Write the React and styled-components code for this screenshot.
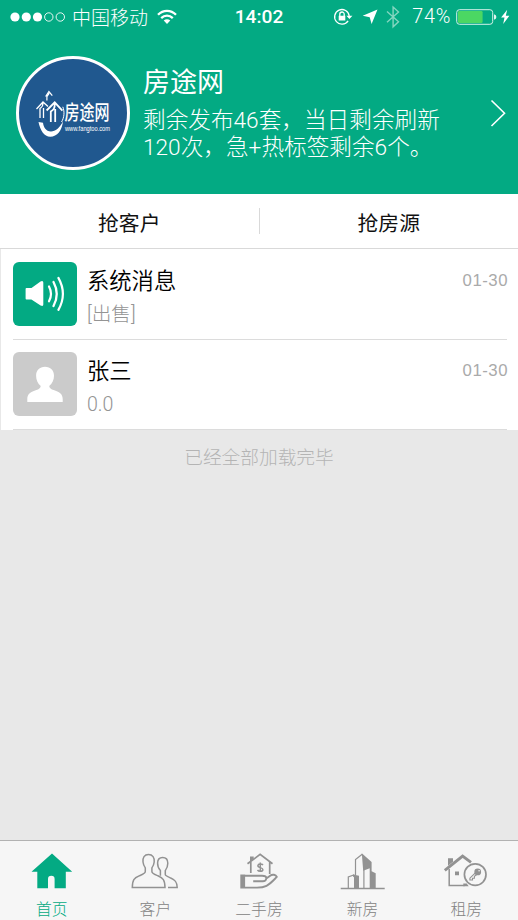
import React from 'react';
import styled, { createGlobalStyle } from 'styled-components';

const GREEN = '#03aa83';
const GRAY = '#929292';

const GlobalStyle = createGlobalStyle`
  * { box-sizing: border-box; }
  body { margin: 0; background: #e8e8e8; }
`;

const Screen = styled.div`
  width: 518px;
  height: 920px;
  display: flex;
  flex-direction: column;
  overflow: hidden;
  background: #e8e8e8;
  font-family: "Liberation Sans", "Noto Sans CJK SC", sans-serif;
  svg { display: block; flex: none; }
`;

const Header = styled.header`
  height: 194px;
  flex: none;
  background: ${GREEN};
  color: #fff;
`;

const StatusBar = styled.div`
  height: 34px;
  display: grid;
  grid-template-columns: 1fr 60px 1fr;
  align-items: center;
  padding: 0 7px 0 10px;
`;

const StatusGroup = styled.div`
  display: flex;
  align-items: center;
  justify-content: ${p => p.$end ? 'flex-end' : 'flex-start'};
`;

const Carrier = styled.span`
  font: 300 19px/28px "Noto Sans CJK SC", sans-serif;
  margin: 0 9px 0 6px;
`;

const Clock = styled.span`
  font: 500 19.2px/28px Roboto, sans-serif;
  text-align: center;
  white-space: nowrap;
  padding-right: 3px;
`;

const Percent = styled.span`
  font: 300 19.8px/28px Roboto, sans-serif;
  letter-spacing: 0.7px;
  margin: 0 5px 0 10px;
`;

const Profile = styled.div`
  display: flex;
  align-items: flex-start;
  padding: 22px 12px 0 16px;
`;

const Avatar = styled.div`
  width: 114px;
  height: 114px;
  border-radius: 50%;
  border: 3.5px solid #fff;
  background: #20588f;
  overflow: hidden;
  flex: none;
`;

const ProfileText = styled.div`
  flex: 1;
  padding: 5px 0 0 13px;
  white-space: nowrap;
`;

const Title = styled.h1`
  margin: 0;
  font: 400 27px/40px "Noto Sans CJK SC", sans-serif;
`;

const Quota = styled.p`
  margin: 6px 0 0;
  font: 300 22.65px/27px Roboto, "Noto Sans CJK SC", sans-serif;
`;

const ChevronSlot = styled.div`
  padding-top: 42px;
`;

const Actions = styled.nav`
  height: 55px;
  flex: none;
  display: flex;
  align-items: center;
  background: #fff;
  border-bottom: 1px solid #d9d9d9;
`;

const Action = styled.div`
  flex: 1;
  text-align: center;
  font: 400 20.8px/30px "Noto Sans CJK SC", sans-serif;
  color: #111;
  padding-top: 1px;
`;

const Divider = styled.div`
  width: 1px;
  height: 26px;
  background: #d9d9d9;
`;

const Messages = styled.main`
  flex: none;
  height: 181px;
  background: #fff;
  border-left: 1px solid #e8e8e8;
  padding: 0 11px 0 12px;
`;

const Message = styled.div`
  height: ${p => p.$last ? 90 : 91}px;
  display: flex;
  align-items: flex-start;
  padding-top: ${p => p.$last ? 12 : 13}px;
  border-bottom: 1px solid #dcdcdc;
`;

const Tile = styled.div`
  width: 64px;
  height: 64px;
  flex: none;
  border-radius: 6px;
  background: ${p => p.$color};
`;

const MessageBody = styled.div`
  flex: 1;
  padding-left: 10px;
`;

const Name = styled.div`
  font: 350 22.3px/34px "Noto Sans CJK SC", sans-serif;
  color: #000;
`;

const Preview = styled.div`
  font: 300 19.6px/30px Roboto, "Noto Sans CJK SC", sans-serif;
  color: #949494;
  margin-top: 4px;
`;

const DateText = styled.time`
  font: 400 16.8px/37px "Liberation Sans", sans-serif;
  letter-spacing: 0.5px;
  color: #aaa;
  margin-right: -1px;
`;

const EndNote = styled.div`
  flex: 1;
  padding-top: 11px;
  text-align: center;
  font: 300 18.7px/30px "Noto Sans CJK SC", sans-serif;
  color: #b4b4b4;
`;

const TabBar = styled.nav`
  height: 80px;
  flex: none;
  display: grid;
  grid-template-columns: repeat(5, 1fr);
  background: #f6f6f6;
  border-top: 1px solid #b2b2b2;
`;

const Tab = styled.div`
  display: flex;
  flex-direction: column;
  align-items: center;
  padding-top: 9px;
  color: ${p => p.$active ? GREEN : GRAY};
`;

const TabLabel = styled.span`
  font: 300 15.8px/24px "Noto Sans CJK SC", sans-serif;
  color: ${p => p.$active ? GREEN : '#838383'};
  margin-top: 7px;
`;

function Signal() {
  return (
    <svg width="56" height="12" viewBox="0 0 56 12" fill="#fff">
      <circle cx="5" cy="6" r="4.6" /><circle cx="16.3" cy="6" r="4.6" /><circle cx="27.5" cy="6" r="4.6" />
      <g fill="none" stroke="#fff" strokeWidth=".9"><circle cx="38.8" cy="6" r="4.2" /><circle cx="50.3" cy="6" r="4.2" /></g>
    </svg>
  );
}

function Wifi() {
  return (
    <svg width="20" height="16" viewBox="0 0 20 16" fill="none" stroke="#fff" strokeWidth="2.3">
      <path d="M1 5.7C6 .5 14 .5 19 5.7M4.2 9.1c3.4-3.3 8.2-3.3 11.6 0" />
      <path d="M6.7 11.5c2-1.8 4.6-1.8 6.6 0L10 15z" fill="#fff" stroke="none" />
    </svg>
  );
}

function StatusIcons() {
  return (
    <svg width="69" height="24" viewBox="0 0 69 24">
      <g fill="none" stroke="#fff" strokeWidth="1.3">
        <path d="M15.1 15.8A7.3 7.3 0 1 1 16.2 11" />
        <path d="M6.8 11V9.2a2.2 2.2 0 0 1 4.4 0V11" />
      </g>
      <path d="M5.7 10.7h6.6v4.9H5.7zM13.4 10.7h6L16.4 14z" fill="#fff" />
      <path d="M44.5 4.5 38.6 19l-1.9-6.7-7-1.6z" fill="#fff" />
      <path d="m54 6.5 11.5 10.2-5.4 5.1V2l5.4 5-11.5 10.2" fill="none" stroke="#84d6c0" strokeWidth="1.4" />
    </svg>
  );
}

function Battery() {
  return (
    <svg width="55" height="20" viewBox="0 0 55 20">
      <rect x=".7" y="2.7" width="36" height="14.6" rx="2.8" fill="none" stroke="#d5f2e9" />
      <rect x="2" y="4" width="24.6" height="12" rx="1.3" fill="#4bd763" />
      <path d="M38 7.2q2.4.5 2.4 2.8T38 12.8z" fill="#e1f5ef" />
      <path d="m51.2 2.8-6.1 7.8h3.4L47.2 17l6.2-8.3h-3.6z" fill="#fff" />
    </svg>
  );
}

function Logo() {
  return (
    <svg width="107" height="107" viewBox="0 0 107 107" fill="none" stroke="#fff">
      <path d="M17.5 50 24 43l5 4.4M24 44c0 4-1.2 4-3 5.5V59M24.5 49v10" strokeWidth="1.3" />
      <path d="M26.6 37.5l3.3-5 3.4 4.2M29.9 34c0 2.5-2 2-2 4v3.5" strokeWidth="1.2" />
      <path d="m27.6 51.5 8.1-8.2 7.7 8.3M35.8 44.5c0 5-1 6-4 8v10.5M36.2 50v13" strokeWidth="1.8" />
      <path d="M43.8 47.8c2 5 1.4 11-1.3 15.2" strokeWidth="1" />
      <path d="M19.5 63c1.7 8 5.5 14.8 11.8 14.8 7 0 11.7-6.4 12.7-15.5-3.6 7.2-7.6 10.2-12.2 10.1-4.9-.1-7.2-3.9-7.8-8.6z" fill="#fff" stroke="none" />
      <text x="45.5" y="61" textLength="45" lengthAdjust="spacingAndGlyphs" fill="#fff" stroke="none" fontFamily="Noto Sans CJK SC" fontSize="20" fontWeight="500">房途网</text>
      <text x="46" y="72.3" textLength="45" lengthAdjust="spacingAndGlyphs" fill="#fff" stroke="none" fontFamily="Liberation Sans" fontSize="7.6">www.fangtoo.com</text>
    </svg>
  );
}

function Chevron() {
  return <svg width="16" height="30" viewBox="0 0 16 30"><path d="m1.5 2.5 13 12.7-13 12.8" fill="none" stroke="#fff" strokeWidth="1.6" /></svg>;
}

function Speaker() {
  return (
    <svg width="64" height="64" viewBox="0 0 64 64" fill="none" stroke="#fff" strokeLinecap="round">
      <path d="M13.5 26h5l9-6.6q2.8-1.3 2.8 1.2v22q0 2.2-2.7.9l-9.2-6h-5q-.8 0-.8-1V27q0-1 .9-1z" fill="#fff" stroke="none" />
      <path d="M36 24.5q4 7.4 0 14.8" strokeWidth="2.2" /><path d="M40.5 20q6.5 12 0 24" strokeWidth="2.3" /><path d="M45.4 15.9q9 16 0 32" strokeWidth="2.2" />
    </svg>
  );
}

function Person() {
  return (
    <svg width="64" height="64" viewBox="0 0 64 64" fill="#fff">
      <path d="M32 14.8c-5.4 0-8.9 3.5-8.9 9 0 4.2 1.6 7.8 4.6 10.1-.2 2.1-2 3.2-4.3 4.1-5.6 2-9.1 3.7-9.1 9.1v2.8h35.4v-2.8c0-5.4-3.6-7.1-9.1-9.1-2.3-.9-4.2-2-4.4-4.1 3.1-2.3 4.8-5.9 4.8-10.1 0-5.5-3.5-9-9-9z" />
    </svg>
  );
}

const TAB_ICONS = {
  home: <path d="M24 3.6 3.5 21.8H9.3V38.3H20V29a3.3 3.3 0 0 1 6.6 0v9.3h11.2V21.8h6.4z" fill="currentColor" />,
  people: (
    <g fill="none" stroke="currentColor" strokeWidth="1.5" transform="translate(.5 0)">
      <path d="M17 4.5c-4.1 0-6 3.1-5.5 7.5.3 2.4 1 4.2 2.3 5.9v3.6c0 2.1-3.1 3.1-6.2 4.4C2.5 28 1 30 .8 37.4h32.7c-.2-7.3-1.8-9.4-7.1-11.6-3-1.2-6-2.1-6-4.2v-3.7c1.3-1.7 2-3.5 2.3-5.9.5-4.4-1.6-7.5-5.7-7.5z" />
      <path d="M28.9 25.7v-5.2c-2-2.1-2.9-4.6-2.8-7.5.1-3.8 2-5.4 5-5.4s5.2 1.9 5.2 5.7c0 3-.8 5.2-2.5 7.3v4c0 1.3 1.9 2 5.4 3.4 4.5 1.8 6.4 3.9 6.5 9.4H36.5" />
    </g>
  ),
  hand: (
    <g fill="none" stroke="currentColor" strokeWidth="1.7" transform="translate(.5 0)">
      <path d="M12 13.8 24.6 4.4 37 13.8M15.3 12V23M34.2 12v12" />
      <path d="M14.5 11.5V6.6h3.7v2.7z" fill="currentColor" stroke="none" />
      <path d="M4.8 24.5h4.8v14H4.8z" fill="currentColor" stroke="none" />
      <path d="M9.5 25.7h17c3 0 4.5.8 4.3 2.8-.2 2-1.6 2.8-3.6 2.8h-9.5M30.8 28.5l3.5-2.6c2.8-2.1 6-1.2 7 1-3 3-6 6.7-10.3 8.9-3 1.5-6 1.8-9.5 1.8h-12" strokeWidth="1.9" />
      <path d="M27.4 15.1c-.6-1.2-4.8-1.6-5 .5-.2 2.5 5.1 1.5 5 4-.1 2.3-4.5 1.9-5.4.4M24.8 12.5v9.6" strokeWidth="1.5" />
    </g>
  ),
  towers: (
    <g stroke="currentColor">
      <path d="M1.7 38.5h44" strokeWidth="1.4" />
      <path d="M9.3 38V27l6-2.2M16.5 25V9.6l6.7-5.4M24.9 38V19.5" fill="none" strokeWidth="1.2" />
      <path d="M14 26.6v-2l6 1.2V38h-5V27.2zM22.8 3.3l9.8 8.8v9.1l4.1 2V38h-6V18.3l-6.5 2.4z" fill="currentColor" stroke="none" />
    </g>
  ),
  key: (
    <g fill="none" stroke="currentColor" transform="translate(-1 0)">
      <path d="M3.8 20.4 21.6 6.2 30 12.4" strokeWidth="2.9" />
      <path d="M8.2 19v16.4h15.5" strokeWidth="1.5" />
      <path d="M7 8.2h5v3.5l-5 4zM14 21.5h4v3.8h-4zM22.3 33.5h3.4l2 2.7h-5.4z" fill="currentColor" stroke="none" />
      <circle cx="34.2" cy="24.6" r="10.8" strokeWidth="1.7" />
      <circle cx="36.7" cy="21.9" r="3.4" fill="currentColor" stroke="none" />
      <circle cx="38.1" cy="20.7" r=".8" fill="#f6f6f6" stroke="none" />
      <path d="m34.1 23.2-5.2 5v1.8h2.6v-1.7h1.9v-2l2.1-1.6" strokeWidth="1.1" />
    </g>
  ),
};

const TABS = [['首页', 'home'], ['客户', 'people'], ['二手房', 'hand'], ['新房', 'towers'], ['租房', 'key']];

export default function App() {
  return (
    <Screen>
      <GlobalStyle />
      <Header>
        <StatusBar>
          <StatusGroup><Signal /><Carrier>中国移动</Carrier><Wifi /></StatusGroup>
          <Clock>14:02</Clock>
          <StatusGroup $end><StatusIcons /><Percent>74%</Percent><Battery /></StatusGroup>
        </StatusBar>
        <Profile>
          <Avatar><Logo /></Avatar>
          <ProfileText>
            <Title>房途网</Title>
            <Quota>剩余发布46套，当日剩余刷新<br />120次，急+热标签剩余6个。</Quota>
          </ProfileText>
          <ChevronSlot><Chevron /></ChevronSlot>
        </Profile>
      </Header>
      <Actions><Action>抢客户</Action><Divider /><Action>抢房源</Action></Actions>
      <Messages>
        <Message>
          <Tile $color={GREEN}><Speaker /></Tile>
          <MessageBody><Name>系统消息</Name><Preview>[出售]</Preview></MessageBody>
          <DateText>01-30</DateText>
        </Message>
        <Message $last>
          <Tile $color="#cbcbcb"><Person /></Tile>
          <MessageBody><Name>张三</Name><Preview>0.0</Preview></MessageBody>
          <DateText>01-30</DateText>
        </Message>
      </Messages>
      <EndNote>已经全部加载完毕</EndNote>
      <TabBar>
        {TABS.map(([label, icon], i) => (
          <Tab key={icon} $active={i === 0}>
            <svg width="48" height="40" viewBox="0 0 48 40">{TAB_ICONS[icon]}</svg>
            <TabLabel $active={i === 0}>{label}</TabLabel>
          </Tab>
        ))}
      </TabBar>
    </Screen>
  );
}
